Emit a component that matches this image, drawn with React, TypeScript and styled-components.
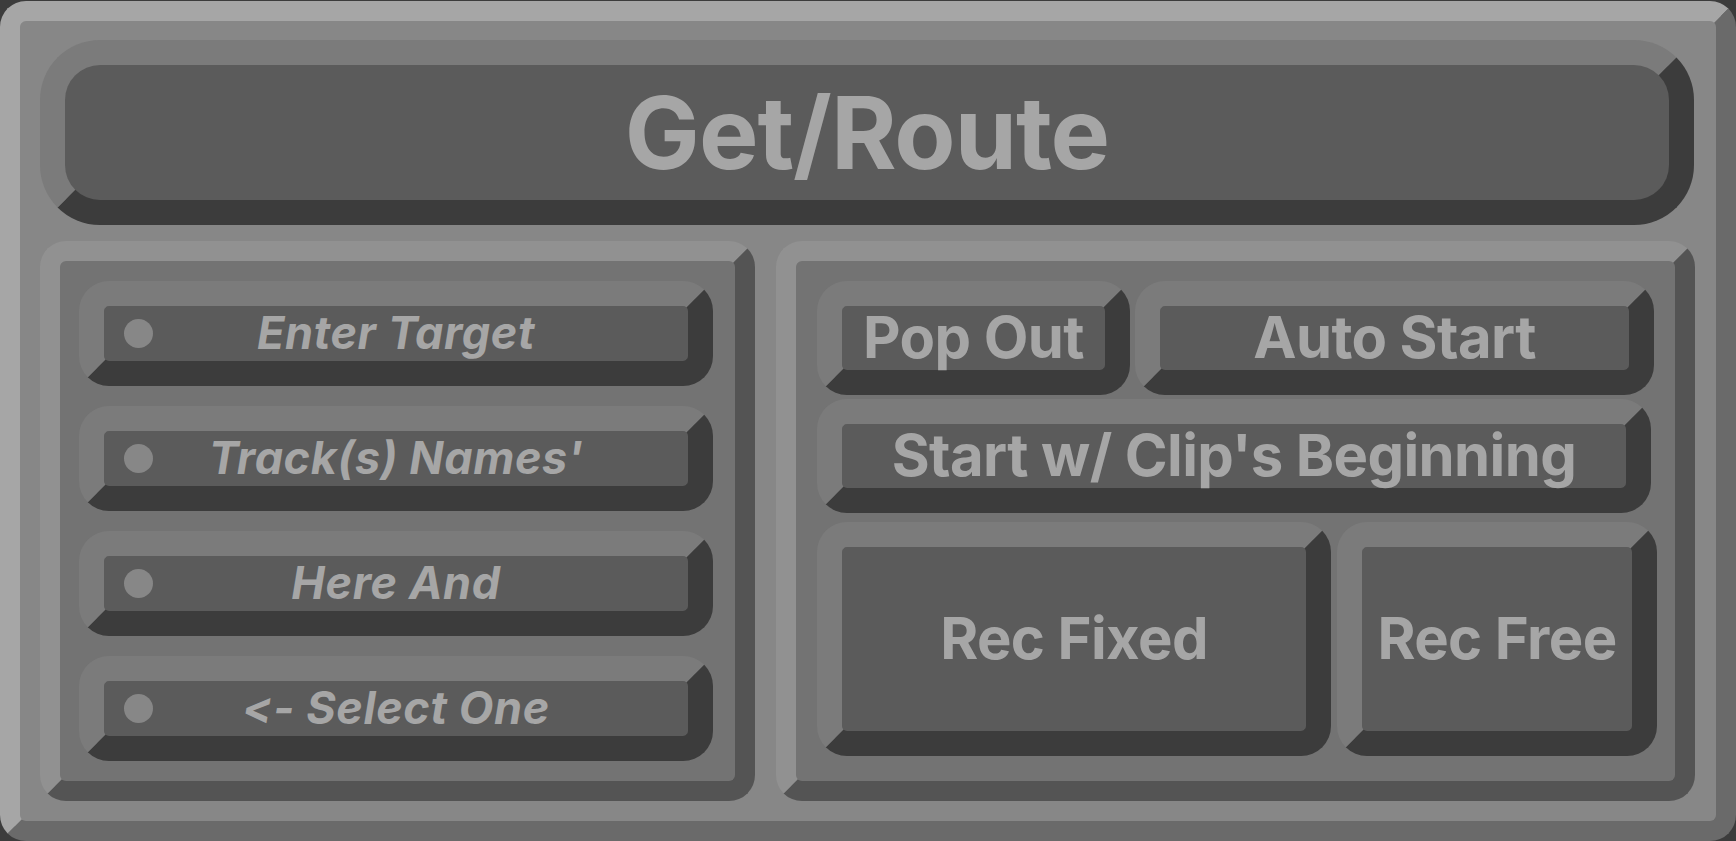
import React from 'react';
import styled, { createGlobalStyle, css } from 'styled-components';

const GlobalStyle = createGlobalStyle`
  html, body {
    margin: 0;
    padding: 0;
    background: #3c3c3c;
  }
  body {
    font-family: Inter, 'Noto Sans', sans-serif;
    overflow: hidden;
  }
`;

const bevel = (light: string, dark: string, width: number, radius: number) => css`
  box-sizing: border-box;
  border-style: solid;
  border-width: ${width}px;
  border-color: ${light} ${dark} ${dark} ${light};
  border-radius: ${radius}px;
`;

const Frame = styled.div`
  ${bevel('#a6a6a6', '#6a6a6a', 20, 26)};
  margin-top: 1px;
  width: 1736px;
  height: 840px;
  background: #878787;
  padding: 19px 21px 20px 20px;
  display: flex;
  flex-direction: column;
  gap: 16px;
`;

const Header = styled.div`
  ${bevel('#7b7b7b', '#3c3c3c', 25, 60)};
  height: 185px;
  width: 1654px;
  background: #5b5b5b;
  display: flex;
  align-items: center;
  justify-content: center;
  color: #a6a6a6;
  font-size: 100px;
  font-weight: 700;
  letter-spacing: -1px;
  line-height: 1;
`;

const Panels = styled.div`
  display: grid;
  grid-template-columns: 715px 919px;
  gap: 21px;
  height: 560px;
`;

const Panel = styled.div`
  ${bevel('#919191', '#545454', 20, 26)};
  background: #737373;
`;

const TargetList = styled(Panel)`
  display: flex;
  flex-direction: column;
  justify-content: space-evenly;
  padding: 0 22px 0 19px;
`;

const TargetRow = styled.div`
  ${bevel('#7b7b7b', '#3c3c3c', 25, 30)};
  height: 105px;
  background: #5b5b5b;
  display: grid;
  grid-template-columns: 49px 1fr 49px;
  align-items: center;
`;

const Led = styled.span`
  justify-self: end;
  width: 29px;
  height: 29px;
  border-radius: 50%;
  background: #878787;
`;

const TargetLabel = styled.span`
  text-align: center;
  color: #a6a6a6;
  font-size: 45px;
  font-weight: 700;
  font-style: italic;
  letter-spacing: 0.6px;
  line-height: 1;
  white-space: nowrap;
  padding-bottom: 2px;
`;

const Controls = styled(Panel)`
  display: flex;
  flex-direction: column;
  padding: 20px 0 25px 21px;
`;

const KeyRow = styled.div<{ $gap: number; $top?: number }>`
  display: flex;
  gap: ${(p) => p.$gap}px;
  margin-top: ${(p) => p.$top ?? 0}px;
`;

const Key = styled.div<{ $w: number; $h: number }>`
  ${bevel('#7b7b7b', '#3c3c3c', 25, 30)};
  width: ${(p) => p.$w}px;
  height: ${(p) => p.$h}px;
  background: #5b5b5b;
  display: flex;
  align-items: center;
  justify-content: center;
  color: #a6a6a6;
  font-size: 58px;
  font-weight: 700;
  letter-spacing: -0.6px;
  line-height: 1;
  white-space: nowrap;
  padding-bottom: 3px;
`;

const targets = ['Enter Target', "Track(s) Names'", 'Here And', '<- Select One'];

export default function App() {
  return (
    <>
      <GlobalStyle />
      <Frame>
        <Header>Get/Route</Header>
        <Panels>
          <TargetList>
            {targets.map((t) => (
              <TargetRow key={t}>
                <Led />
                <TargetLabel>{t}</TargetLabel>
                <span />
              </TargetRow>
            ))}
          </TargetList>
          <Controls>
            <KeyRow $gap={5}>
              <Key $w={313} $h={114}>Pop Out</Key>
              <Key $w={519} $h={114}>Auto Start</Key>
            </KeyRow>
            <KeyRow $gap={0} $top={4}>
              <Key $w={834} $h={114}>Start w/ Clip's Beginning</Key>
            </KeyRow>
            <KeyRow $gap={6} $top={9}>
              <Key $w={514} $h={234}>Rec Fixed</Key>
              <Key $w={320} $h={234}>Rec Free</Key>
            </KeyRow>
          </Controls>
        </Panels>
      </Frame>
    </>
  );
}
